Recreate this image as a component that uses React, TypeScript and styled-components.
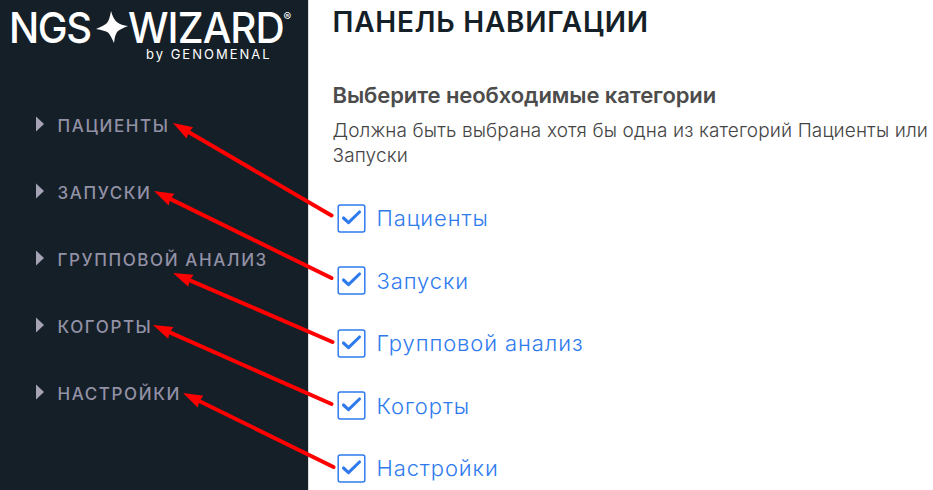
import React from 'react';
import styled, { createGlobalStyle } from 'styled-components';

const GlobalStyle = createGlobalStyle`
  * { box-sizing: border-box; }
  body { margin: 0; background: #fff; font-family: Inter, "Liberation Sans", sans-serif; }
`;

const Page = styled.div`
  position: relative;
  display: flex;
  width: 933px;
  height: 490px;
  overflow: hidden;
`;

const Sidebar = styled.aside`
  flex: none;
  width: 309px;
  background: #151f28;
  border-right: 1px solid #dcdddf;
`;

const Brand = styled.div`
  height: 92px;
  padding: 9px 0 0 9px;
  color: #fff;
`;

const BrandRow = styled.div`
  display: flex;
  align-items: flex-start;
  height: 37px;
`;

const BrandWord = styled.span<{ $width: number; $scale: number; $spacing: number }>`
  flex: none;
  width: ${(p) => p.$width}px;
  font-size: 43px;
  line-height: 37px;
  font-weight: 500;
  letter-spacing: ${(p) => p.$spacing}px;
  white-space: nowrap;
  transform: scaleX(${(p) => p.$scale});
  transform-origin: left center;
`;

const Star = styled.svg`
  flex: none;
  width: 32px;
  height: 32px;
  margin-top: 2px;
`;

const Registered = styled.span`
  font-size: 11.5px;
  line-height: 12px;
  margin-top: 2px;
`;

const Byline = styled.div`
  padding-left: 137px;
  font-size: 13px;
  line-height: 17px;
  letter-spacing: 2px;
  white-space: nowrap;
`;

const Menu = styled.nav`
  display: flex;
  flex-direction: column;
`;

const MenuItem = styled.div`
  display: flex;
  align-items: center;
  height: 67px;
  padding-left: 35.5px;
  gap: 14px;
  color: #9391a5;
  font-size: 17px;
  font-weight: 500;
  letter-spacing: 1.6px;
  white-space: nowrap;
`;

const Caret = styled.svg`
  flex: none;
  width: 8px;
  height: 16px;
  margin-top: -3px;
`;

const Content = styled.main`
  flex: 1;
  padding-left: 23.5px;
`;

const Title = styled.h1`
  margin: 0;
  padding-top: 5px;
  color: #151f28;
  font-size: 28px;
  line-height: 34px;
  font-weight: 600;
  letter-spacing: 0.75px;
  white-space: nowrap;
`;

const Subtitle = styled.h2`
  margin: 42px 0 0;
  color: #4c4c4c;
  font-size: 22px;
  line-height: 28px;
  font-weight: 600;
  letter-spacing: -0.08px;
  white-space: nowrap;
`;

const Hint = styled.p`
  margin: 9px 0 0;
  color: #444;
  font-size: 19px;
  line-height: 25px;
  font-weight: 300;
  letter-spacing: 0.12px;
  white-space: nowrap;
`;

const Options = styled.div`
  display: grid;
  grid-auto-rows: 62.5px;
  margin-top: 19px;
`;

const Option = styled.label`
  display: flex;
  align-items: center;
  gap: 10.5px;
  padding-left: 4.5px;
  color: #2f7bee;
  font-size: 22px;
  font-weight: 300;
  letter-spacing: 0.9px;
  white-space: nowrap;
`;

const CheckIcon = styled.svg`
  flex: none;
  width: 29px;
  height: 29px;
`;

const Annotations = styled.svg`
  position: absolute;
  inset: 0;
  width: 933px;
  height: 490px;
  pointer-events: none;
`;

const menuItems = ['ПАЦИЕНТЫ', 'ЗАПУСКИ', 'ГРУППОВОЙ АНАЛИЗ', 'КОГОРТЫ', 'НАСТРОЙКИ'];
const categories = ['Пациенты', 'Запуски', 'Групповой анализ', 'Когорты', 'Настройки'];

// Each arrow runs from a checkbox (tail) to its menu entry (tip).
const arrows = [
  { tip: [173, 123], tail: [331.5, 215.5] },
  { tip: [154, 191], tail: [331.5, 278] },
  { tip: [173, 273], tail: [332.5, 342] },
  { tip: [153, 325], tail: [331.5, 404] },
  { tip: [183, 393], tail: [333.5, 467] },
];

function Arrow({ tip, tail }: { tip: number[]; tail: number[] }) {
  const dx = tail[0] - tip[0];
  const dy = tail[1] - tip[1];
  const length = Math.hypot(dx, dy);
  const angle = (Math.atan2(dy, dx) * 180) / Math.PI;
  return (
    <g transform={`translate(${tip[0]} ${tip[1]}) rotate(${angle})`}>
      <line x1="14" y1="0" x2={length} y2="0" stroke="#ff0000" strokeWidth="4" strokeLinecap="round" />
      <path d="M0 0L19.5-6.5L18.2 0L19.5 6.5Z" fill="#ff0000" />
    </g>
  );
}

export default function App() {
  return (
    <>
      <GlobalStyle />
      <Page>
        <Sidebar>
          <Brand>
            <BrandRow>
              <BrandWord $width={87} $scale={0.93} $spacing={-1.5}>NGS</BrandWord>
              <Star viewBox="0 0 32 32">
                <path d="M15 0Q17.500 9 21.500 11.500Q25 14 32 15Q24 18 21.500 20.500Q19 23 18 32Q14.500 24 12 21.500Q9 19.500 0 18Q8.500 14.500 11 12Q13.500 9 15 0Z" fill="#fff" />
              </Star>
              <BrandWord $width={155.5} $scale={0.94} $spacing={-1}>WIZARD</BrandWord>
              <Registered>®</Registered>
            </BrandRow>
            <Byline>by GENOMENAL</Byline>
          </Brand>
          <Menu>
            {menuItems.map((label) => (
              <MenuItem key={label}>
                <Caret viewBox="0 0 8 16"><path d="M0 0.500L8 8L0 15.500Z" fill="#a5a3b5" /></Caret>
                {label}
              </MenuItem>
            ))}
          </Menu>
        </Sidebar>
        <Content>
          <Title>ПАНЕЛЬ НАВИГАЦИИ</Title>
          <Subtitle>Выберите необходимые категории</Subtitle>
          <Hint>
            Должна быть выбрана хотя бы одна из категорий Пациенты или
            <br />
            Запуски
          </Hint>
          <Options>
            {categories.map((label) => (
              <Option key={label}>
                <CheckIcon viewBox="0 0 29 29" fill="none">
                  <rect x="1.200" y="1" width="26.600" height="27" rx="2" stroke="#2f7bee" strokeWidth="1.500" />
                  <path d="M6.500 14L11.500 18.700L22.500 8" stroke="#2f7bee" strokeWidth="3.100" strokeLinecap="round" strokeLinejoin="round" />
                </CheckIcon>
                {label}
              </Option>
            ))}
          </Options>
        </Content>
        <Annotations viewBox="0 0 933 490">
          {arrows.map((a) => (
            <Arrow key={a.tip.join()} tip={a.tip} tail={a.tail} />
          ))}
        </Annotations>
      </Page>
    </>
  );
}
